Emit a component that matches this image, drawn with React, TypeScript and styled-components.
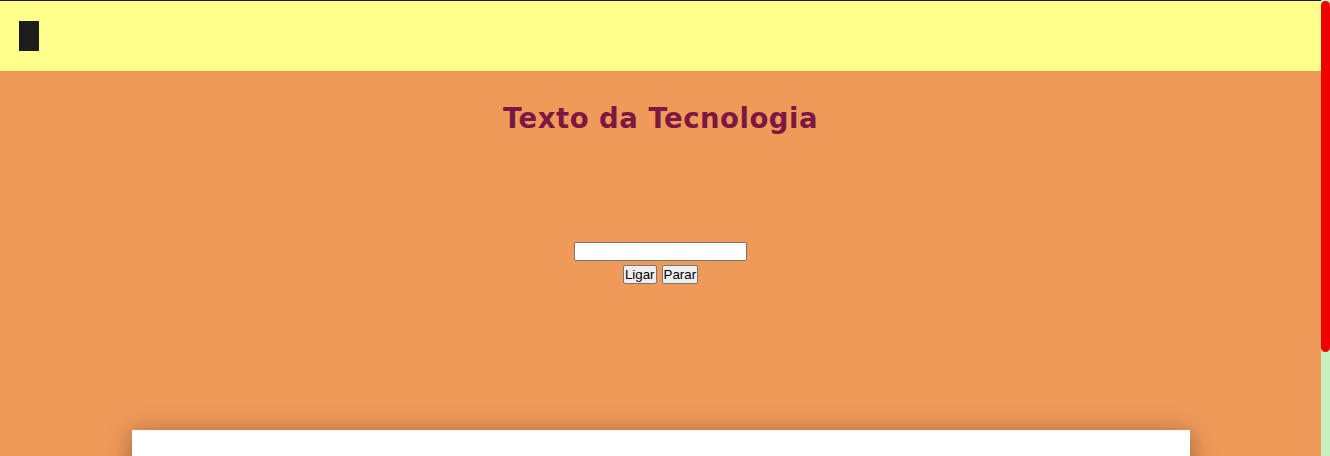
import styled, { createGlobalStyle } from 'styled-components';

const GlobalStyle = createGlobalStyle`
  html, body {
    margin: 0;
    padding: 0;
    height: 100%;
    overflow: hidden;
    background: #f09a5a;
    font-family: "Liberation Sans", Arial, sans-serif;
  }
  #root {
    height: 100%;
  }
`;

const Page = styled.div`
  height: 100vh;
  display: flex;
  background: #f09a5a;
`;

const Content = styled.div`
  flex: 1;
  min-width: 0;
  overflow: hidden;
`;

const ScrollRail = styled.aside`
  width: 9px;
  flex-shrink: 0;
  background: #c6f0c0;
  padding-top: 1px;
`;

const ScrollThumb = styled.div`
  height: 351px;
  background: #ee0000;
  border-radius: 5px;
`;

const Header = styled.header`
  box-sizing: border-box;
  height: 71px;
  background: #ffff8a;
  border-top: 1px solid #1c1c1c;
  display: flex;
  align-items: flex-start;
  padding: 20px 19px 0;
`;

const Cursor = styled.span`
  display: block;
  width: 20px;
  height: 30px;
  background: #1c1c1c;
`;

const Main = styled.main`
  background: #f09a5a;
  padding: 31px 0 140px;
  display: flex;
  flex-direction: column;
  align-items: center;
`;

const Title = styled.h1`
  margin: 0;
  font-family: "Comic Sans MS", "DejaVu Sans", sans-serif;
  font-size: 27.5px;
  font-weight: bold;
  color: #7b1742;
  letter-spacing: 0.5px;
`;

const Controls = styled.section`
  margin-top: 108px;
  display: flex;
  flex-direction: column;
  align-items: center;
  gap: 4px;
`;

const TextInput = styled.input`
  width: 169px;
  height: 15px;
  padding: 1px;
  border: 1px solid #767676;
  border-radius: 2px;
  background: #fff;
  font-size: 13px;
`;

const Buttons = styled.div`
  display: flex;
  gap: 5px;
`;

const Button = styled.button`
  font-family: "Liberation Sans", Arial, sans-serif;
  font-size: 13.33px;
  padding: 1px 1px;
  border: 1px solid #767676;
  border-radius: 2px;
  background: #efefef;
  color: #000;
  height: 19px;
  line-height: 15px;
`;

const Card = styled.div`
  margin-top: 146px;
  width: 1058px;
  height: 160px;
  background: #fff;
  box-shadow: 0 4px 24px rgba(0, 0, 0, 0.38);
`;

export default function App() {
  return (
    <Page>
      <GlobalStyle />
      <Content>
        <Header>
          <Cursor />
        </Header>
        <Main>
          <Title>Texto da Tecnologia</Title>
          <Controls>
            <TextInput type="text" />
            <Buttons>
              <Button>Ligar</Button>
              <Button>Parar</Button>
            </Buttons>
          </Controls>
          <Card />
        </Main>
      </Content>
      <ScrollRail>
        <ScrollThumb />
      </ScrollRail>
    </Page>
  );
}
